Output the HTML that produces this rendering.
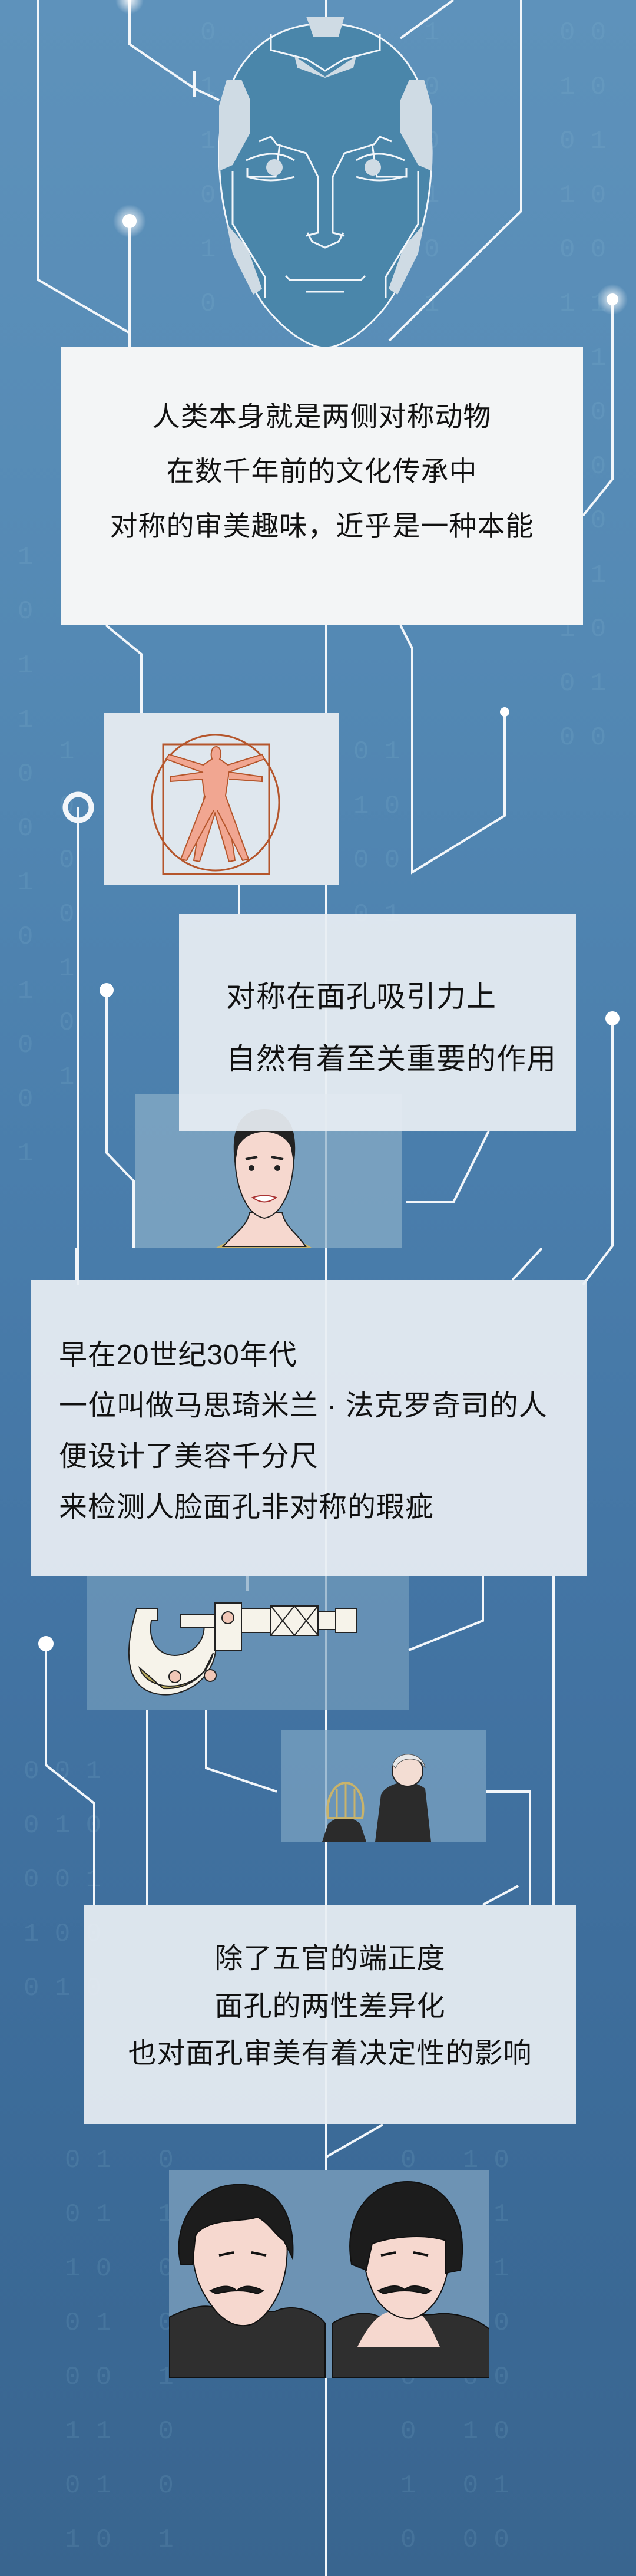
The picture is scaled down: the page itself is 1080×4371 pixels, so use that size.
<!DOCTYPE html>
<html><head><meta charset="utf-8">
<style>
html,body{margin:0;padding:0}
body{width:1080px;height:4371px;position:relative;overflow:hidden;
background:linear-gradient(180deg,#5e92bb 0%,#5489b4 25%,#4a7eac 45%,#4273a2 65%,#3b6a97 85%,#39658f 100%);
font-family:"Liberation Sans","Noto Sans CJK SC",sans-serif;color:#111}
.abs{position:absolute}
.box{position:absolute;background:rgba(232,238,243,0.93)}
.t{position:absolute;font-size:47px;line-height:1;white-space:nowrap;letter-spacing:1px}
.bin{position:absolute;font-family:"Liberation Mono",monospace;font-size:44px;color:rgba(150,200,220,0.14);line-height:92px;white-space:pre}
</style></head><body>

<div class="bin" style="left:30px;top:900px">1
0
1
1
0
0
1
0
1
0
0
1</div>
<div class="bin" style="left:340px;top:10px">0
1
1
0
1
0
0</div>
<div class="bin" style="left:720px;top:10px">1
0
0
1
0
1
1
0
0
1
0</div>
<div class="bin" style="left:950px;top:10px">0 0
1 0
0 1
1 0
0 0
1 1
0 1
1 0
0 0
1 0
0 1
1 0
0 1
0 0</div>
<div class="bin" style="left:100px;top:1230px">1
0
0
0
1
0
1</div>
<div class="bin" style="left:600px;top:1230px">0 1
1 0
0 0
0 1</div>
<div class="bin" style="left:40px;top:2960px">0 0 1
0 1 0
0 0 1
1 0 0
0 1 0</div>
<div class="bin" style="left:110px;top:3620px">0 1   0
0 1   1
1 0   0
0 1   0
0 0   1
1 1   0
0 1   0
1 0   1</div>
<div class="bin" style="left:680px;top:3620px">0   1 0
1   0 1
0   0 1
1   1 0
0   0 0
0   1 0
1   0 1
0   0 0</div>

<svg class="abs" style="left:0;top:0" width="1080" height="4371" viewBox="0 0 1080 4371" fill="none" stroke="#f2f6fa" stroke-width="4">
<defs><radialGradient id="g"><stop offset="0" stop-color="#fff" stop-opacity="0.9"/><stop offset="1" stop-color="#fff" stop-opacity="0"/></radialGradient></defs>
<line x1="554" y1="0" x2="554" y2="4371"/>
<polyline points="65,0 65,475 220,565"/>
<polyline points="220,375 220,600"/>
<polyline points="220,0 220,75 330,150 372,170"/>
<polyline points="330,120 330,165"/>
<polyline points="885,0 885,358 661,578"/>
<polyline points="770,0 680,65"/>
<polyline points="1040,508 1040,813 990,875"/>
<polyline points="180,1061 240,1110 240,1210"/>
<polyline points="680,1061 700,1100 700,1480 857,1384 857,1208"/>
<polyline points="406,1501 406,1551"/>
<polyline points="133,1370 133,2180"/>
<polyline points="181,1680 181,1956 227,2004 227,2118"/>
<polyline points="1040,1728 1040,2114 990,2180"/>
<polyline points="830,1919 770,2040 690,2040"/>
<polyline points="130,2118 130,2172"/>
<polyline points="920,2118 870,2172"/>
<polyline points="420,2675 420,2700"/>
<polyline points="78,2789 78,2995 160,3060 160,3232"/>
<polyline points="250,2902 250,3232"/>
<polyline points="350,2902 350,3000 470,3040"/>
<polyline points="694,2800 820,2750 820,2675"/>
<polyline points="940,2675 940,3232"/>
<polyline points="826,3040 900,3040 900,3232"/>
<polyline points="250,3140 250,3232"/>
<polyline points="820,3232 880,3200"/>
<polyline points="554,3660 650,3605"/>
<circle cx="220" cy="375" r="28" fill="url(#g)" stroke="none"/><circle cx="220" cy="375" r="12" fill="#fff" stroke="none"/>
<circle cx="1040" cy="508" r="26" fill="url(#g)" stroke="none"/><circle cx="1040" cy="508" r="10" fill="#fff" stroke="none"/>
<circle cx="220" cy="0" r="24" fill="url(#g)" stroke="none"/>
<circle cx="857" cy="1208" r="8" fill="#fff" stroke="none"/>
<circle cx="133" cy="1370" r="22" stroke-width="9"/>
<circle cx="181" cy="1680" r="12" fill="#fff" stroke="none"/>
<circle cx="1040" cy="1728" r="12" fill="#fff" stroke="none"/>
<circle cx="78" cy="2789" r="13" fill="#fff" stroke="none"/>
<g stroke-width="3">
<path d="M552 40 C450 40 372 110 372 260 C372 360 400 450 450 520 C490 570 530 590 552 590 C575 590 615 570 655 520 C705 450 733 360 733 260 C733 110 655 40 552 40 Z" fill="#4a86aa"/>
<path d="M520 28 L585 28 L575 62 L532 62 Z" fill="#cfdbe4" stroke="none"/>
<path d="M460 58 L460 85 L520 100 L552 120 L585 100 L645 85 L645 58" />
<path d="M500 95 L552 130 L605 95 L600 115 L552 132 L505 115 Z" fill="#cfdbe4" stroke="none"/>
<path d="M385 135 L410 135 L425 170 L425 225 L395 280 L372 290 L372 180 Z" fill="#cfdbe4" stroke="none"/>
<path d="M720 135 L695 135 L680 170 L680 225 L710 280 L733 290 L733 180 Z" fill="#cfdbe4" stroke="none"/>
<path d="M385 380 L420 420 L445 490 L430 500 L395 430 Z" fill="#cfdbe4" stroke="none"/>
<path d="M720 380 L685 420 L660 490 L675 500 L710 430 Z" fill="#cfdbe4" stroke="none"/>
<path d="M395 290 L395 380 L450 470 L450 505"/>
<path d="M710 290 L710 380 L655 470 L655 505"/>
<path d="M420 285 L420 300 L468 300 L475 245 M690 285 L690 300 L640 300 L632 245"/>
<path d="M440 240 L460 232 L470 245 L520 260 L540 300 L540 395 L520 400 M665 240 L645 232 L635 245 L585 260 L565 300 L565 395 L585 400"/>
<path d="M522 395 L530 410 L552 420 L575 410 L583 395"/>
<path d="M418 272 Q465 250 500 272 M605 272 Q640 250 687 272"/>
<path d="M420 300 Q460 312 500 300 M605 300 Q645 312 685 300"/>
<circle cx="466" cy="284" r="14" fill="#cfdbe4" stroke="none"/>
<circle cx="633" cy="284" r="14" fill="#cfdbe4" stroke="none"/>
<path d="M485 468 L492 475 L613 475 L620 468"/>
<path d="M520 495 L585 495"/>
</g>
</svg>

<div class="box" style="left:103px;top:589px;width:887px;height:472px;background:#f3f5f6"></div>
<div class="t" style="left:103px;width:887px;top:683px;text-align:center">人类本身就是两侧对称动物</div>
<div class="t" style="left:103px;width:887px;top:776px;text-align:center">在数千年前的文化传承中</div>
<div class="t" style="left:103px;width:887px;top:869px;text-align:center">对称的审美趣味，近乎是一种本能</div>

<div class="abs" style="left:177px;top:1210px;width:399px;height:291px;background:#dfe7ee"></div>
<svg class="abs" style="left:177px;top:1210px" width="399" height="291" viewBox="0 0 399 291" fill="none">
<ellipse cx="189" cy="152" rx="108" ry="115" stroke="#b5562c" stroke-width="3"/>
<rect x="100" y="53" width="180" height="220" stroke="#b5562c" stroke-width="3"/>
<path d="M190 57 C182 57 180 70 183 78 L168 88 L110 70 L105 78 L165 100 L170 140 L152 250 L162 252 L188 170 L212 252 L222 250 L206 140 L212 100 L272 78 L268 70 L210 88 L196 78 C200 70 198 57 190 57 Z" fill="#f1a691" stroke="#b5562c" stroke-width="2"/>
<path d="M172 140 L130 248 L140 250 L186 165 M206 140 L245 248 L235 250 L192 165" fill="#f1a691" stroke="#b5562c" stroke-width="2"/>
<path d="M168 100 L112 108 L112 116 L168 112 M212 100 L268 108 L268 116 L212 112" fill="#f1a691" stroke="#b5562c" stroke-width="2"/>
</svg>

<div class="abs" style="left:229px;top:1857px;width:453px;height:261px;background:rgba(140,175,200,0.7)"></div>
<svg class="abs" style="left:229px;top:1857px" width="453" height="261" viewBox="0 0 453 261">
<path d="M138 260 L160 248 L220 245 L280 248 L300 260 Z" fill="#c9b36a"/>
<path d="M150 258 C170 235 190 225 195 200 L250 200 C255 225 275 235 290 258 Z" fill="#f6d8cf" stroke="#222" stroke-width="2"/>
<path d="M170 110 C165 70 180 50 220 50 C260 50 275 70 270 110 C268 160 250 205 220 210 C190 205 172 160 170 110 Z" fill="#f6d8cf" stroke="#222" stroke-width="2"/>
<path d="M170 120 C160 50 185 25 220 25 C255 25 280 50 270 120 L265 90 C250 55 190 55 175 90 Z" fill="#222"/>
<path d="M188 110 L208 106 M232 106 L252 110" stroke="#222" stroke-width="4"/>
<circle cx="198" cy="125" r="5" fill="#222"/><circle cx="242" cy="125" r="5" fill="#222"/>
<path d="M200 175 Q220 190 240 175 Q220 168 200 175 Z" fill="#fff" stroke="#a33" stroke-width="2"/>
</svg>

<div class="box" style="left:304px;top:1551px;width:674px;height:368px"></div>
<div class="t" style="left:384px;top:1666px;font-size:50px">对称在面孔吸引力上</div>
<div class="t" style="left:384px;top:1772px;font-size:50px">自然有着至关重要的作用</div>

<div class="box" style="left:52px;top:2172px;width:945px;height:503px"></div>
<div class="t" style="left:100px;top:2276px;font-size:48px">早在20世纪30年代</div>
<div class="t" style="left:100px;top:2362px;font-size:48px">一位叫做马思琦米兰 · 法克罗奇司的人</div>
<div class="t" style="left:100px;top:2448px;font-size:48px">便设计了美容千分尺</div>
<div class="t" style="left:100px;top:2534px;font-size:48px">来检测人脸面孔非对称的瑕疵</div>

<div class="abs" style="left:147px;top:2675px;width:547px;height:227px;background:rgba(120,160,190,0.65)"></div>
<svg class="abs" style="left:147px;top:2675px" width="560" height="227" viewBox="0 0 560 227" stroke="#222" stroke-width="2">
<path d="M85 55 L120 55 L120 75 L110 75 C100 130 150 150 185 120 C200 105 200 90 200 75 L220 75 L220 120 C215 180 160 205 125 200 C80 195 55 155 85 55 Z" fill="#f6f3ea"/>
<path d="M90 155 C100 190 165 200 200 160 L215 130 C205 170 170 192 130 190 Z" fill="#b8a95c"/>
<rect x="160" y="65" width="60" height="22" fill="#f6f3ea"/>
<rect x="218" y="45" width="45" height="80" fill="#f6f3ea"/>
<rect x="263" y="55" width="50" height="40" fill="#f6f3ea"/>
<rect x="313" y="50" width="80" height="50" fill="#f6f3ea"/>
<path d="M313 50 L353 100 M353 50 L313 100 M353 50 L393 100 M393 50 L353 100" />
<rect x="393" y="60" width="30" height="30" fill="#f6f3ea"/>
<rect x="423" y="55" width="35" height="40" fill="#f6f3ea"/>
<circle cx="240" cy="70" r="10" fill="#f1c7b7"/>
<circle cx="150" cy="170" r="10" fill="#f1c7b7"/><circle cx="210" cy="168" r="10" fill="#f1c7b7"/>
</svg>

<div class="abs" style="left:477px;top:2935px;width:349px;height:190px;background:rgba(125,165,195,0.7)"></div>
<svg class="abs" style="left:477px;top:2935px" width="349" height="190" viewBox="0 0 349 190">
<path d="M160 190 L170 110 C180 90 220 80 245 100 L255 190 Z" fill="#2b2b2b"/>
<circle cx="215" cy="70" r="26" fill="#f3ddd3" stroke="#222" stroke-width="2"/>
<path d="M190 60 C195 35 240 35 245 65 L238 55 C220 45 200 50 195 65 Z" fill="#e8e8e8" stroke="#555"/>
<path d="M70 190 L80 160 C95 145 120 145 135 160 L145 190 Z" fill="#2b2b2b"/>
<path d="M80 150 C75 110 95 90 110 90 C125 90 145 110 138 150 Z" fill="none" stroke="#c9b36a" stroke-width="4"/>
<path d="M110 90 L110 150 M95 100 L95 150 M125 100 L125 150" stroke="#c9b36a" stroke-width="3"/>
</svg>

<div class="box" style="left:143px;top:3232px;width:835px;height:372px"></div>
<div class="t" style="left:143px;width:835px;top:3300px;text-align:center;font-size:48px">除了五官的端正度</div>
<div class="t" style="left:143px;width:835px;top:3381px;text-align:center;font-size:48px">面孔的两性差异化</div>
<div class="t" style="left:143px;width:835px;top:3461px;text-align:center;font-size:48px">也对面孔审美有着决定性的影响</div>

<div class="abs" style="left:287px;top:3682px;width:544px;height:353px;background:#6d93b4"></div>
<svg class="abs" style="left:287px;top:3682px" width="544" height="353" viewBox="0 0 544 353" stroke="#111" stroke-width="2">
<path d="M0 353 L0 250 C40 230 70 225 90 240 L180 240 C210 225 250 240 265 260 L265 353 Z" fill="#2f2f2f"/>
<path d="M40 140 C40 90 80 70 130 70 C180 70 205 100 200 150 C198 200 170 250 140 262 C120 268 100 262 80 240 C55 210 42 180 40 140 Z" fill="#f6d8cf"/>
<path d="M20 160 C5 100 40 30 110 25 C180 20 215 70 210 150 L195 120 C180 110 170 90 150 80 C120 90 70 80 45 110 L40 160 Z" fill="#1c1c1c"/>
<path d="M70 205 Q100 190 115 205 Q130 190 160 205 L150 210 Q120 200 80 210 Z" fill="#1c1c1c"/>
<path d="M85 145 L110 140 M140 140 L165 145" stroke-width="4"/>
<path d="M278 353 L278 260 C310 240 340 240 360 250 L450 245 C480 240 520 250 544 270 L544 353 Z" fill="#2f2f2f"/>
<path d="M320 300 C340 260 360 240 380 240 L420 240 C440 250 450 280 460 300 Z" fill="#f6d8cf" stroke="none"/>
<path d="M330 140 C330 90 370 70 415 70 C460 70 480 100 475 150 C473 200 450 240 415 252 C390 255 365 240 350 215 C338 190 330 165 330 140 Z" fill="#f6d8cf"/>
<path d="M310 160 C295 80 340 20 405 20 C470 20 510 80 495 170 L470 175 L470 120 C440 110 390 110 345 125 L335 170 Z" fill="#1c1c1c"/>
<path d="M355 205 Q385 190 400 203 Q415 190 445 205 L435 210 Q400 200 365 210 Z" fill="#1c1c1c"/>
<path d="M360 145 L385 140 M415 140 L440 145" stroke-width="4"/>
</svg>

</body></html>
